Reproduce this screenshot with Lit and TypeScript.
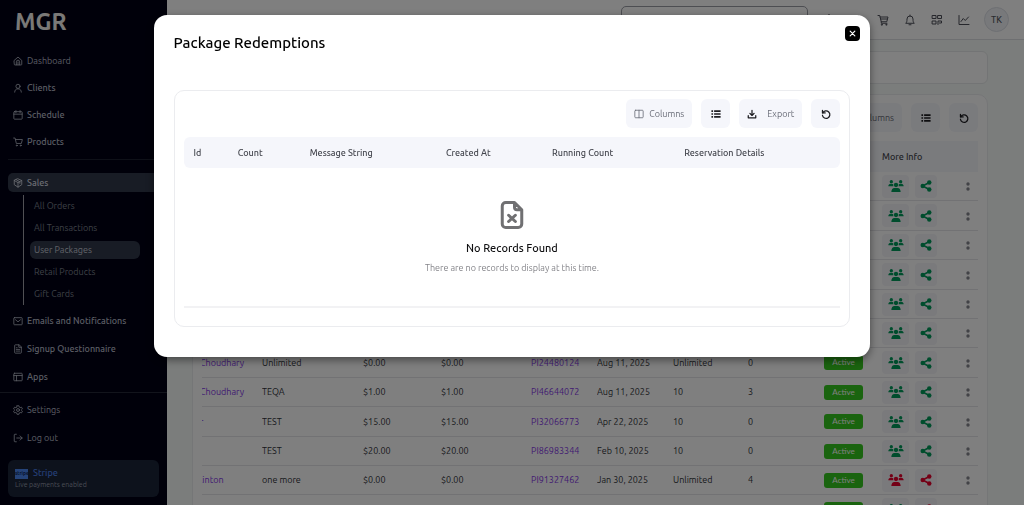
import { LitElement, html, css, svg, nothing } from "lit";
import { customElement } from "lit/decorators.js";
import { classMap } from "lit/directives/class-map.js";

const stroke = (body: unknown, cls = "", width = 2) => html`<svg class="icon ${cls}" viewBox="0 0 24 24" fill="none" stroke="currentColor" stroke-width=${width} stroke-linecap="round" stroke-linejoin="round" aria-hidden="true">${body}</svg>`;
const solid = (body: unknown, cls = "", box = "0 0 24 24") => html`<svg class="icon ${cls}" viewBox=${box} fill="currentColor" aria-hidden="true">${body}</svg>`;

const glyph = {
  home: svg`<path d="M3 10.5 12 2.5l9 8V20a1.5 1.5 0 0 1-1.5 1.5h-15A1.5 1.5 0 0 1 3 20z"/><path d="M8 21v-7a4 4 0 0 1 8 0v7M12 14v7"/>`,
  user: svg`<circle cx="12" cy="8" r="5"/><path d="M4 22c0-5 3-8 8-8s8 3 8 8"/>`,
  calendar: svg`<rect x="2" y="4" width="20" height="18" rx="1.5"/><path d="M2 10h20M7 1.5v5M17 1.5v5"/>`,
  cart: svg`<path d="M1.5 2.5H5l3 13h12l2.500-9.500H6"/><circle cx="9" cy="20.500" r="1.200"/><circle cx="18.500" cy="20.500" r="1.200"/>`,
  shop: svg`<path d="M2 3h3.500l3 12.500h11L22 6H6.300M8.500 15.500v3H20"/><circle cx="9.500" cy="21.500" r="1"/><circle cx="18.500" cy="21.500" r="1"/><path d="M7.500 10h13"/>`,
  box: svg`<path d="M12 2l9 4v10l-9 6-9-6V6z"/><path d="M3 6l9 5 9-5M12 11v11M7.500 4l9 5v4"/>`,
  mail: svg`<rect x="2" y="4" width="20" height="17" rx="1.500"/><path d="M6 9l6 5 6-5"/>`,
  doc: svg`<path d="M14 2H5.500A1.500 1.500 0 0 0 4 3.500v17A1.500 1.500 0 0 0 5.500 22h13a1.500 1.500 0 0 0 1.500-1.500V8z"/><path d="M14 2v6h6M8 13h8M8 17h8M8 9h2"/>`,
  layout: svg`<rect x="2" y="3" width="20" height="18" rx="1.500"/><path d="M2 8.500h20M8.500 8.500V21"/>`,
  gear: svg`<circle cx="12" cy="12" r="3.500"/><path d="M9.700 1.800h4.600l.8 3.300 2 1.200 3.300-1 2.200 4-2.400 2.300v1l2.400 2.300-2.200 4-3.300-1-2 1.200-.8 3.200H9.700l-.8-3.200-2-1.200-3.300 1-2.200-4 2.400-2.300v-1L1.400 9.300l2.200-4 3.300 1 2-1.200z"/>`,
  logout: svg`<path d="M8 3H4.500A1.500 1.500 0 0 0 3 4.500v15A1.500 1.500 0 0 0 4.500 21H8M9 12h13M17 7l5 5-5 5"/>`,
  columns: svg`<rect x="2" y="3" width="20" height="18" rx="2"/><path d="M12 3v18"/>`,
  download: svg`<path d="M12 3v12M7 10.500l5 5 5-5M3 16v5h18v-5"/>`,
  refresh: svg`<path d="M3.500 3v6.500H10"/><path d="M4.200 9.500a9 9 0 1 1-.8 5.500"/>`,
  list: svg`<path d="M1 3h4v4H1zM1 10h4v4H1zM1 17h4v4H1zM7.500 3H23v4H7.500zM7.500 10H23v4H7.500zM7.500 17H23v4H7.500z"/>`,
  bell: svg`<path d="M4 18c1.500-1.500 2-3 2-8a6 6 0 0 1 12 0c0 5 .5 6.500 2 8zM10 21.500h4M12 4V2"/>`,
  qr: svg`<path d="M3 3h7v6H3zM14 3h7v6h-7zM3 14h7v6H3zM14 21v-7h7v4h-4"/>`,
  chart: svg`<path d="M2 3v18h20"/><path d="M6 15l4.500-6 4 4L21 6"/>`,
  fileX: svg`<path d="M14 2H7a2.800 2.800 0 0 0-2.800 2.800v14.400A2.800 2.800 0 0 0 7 22h10a2.800 2.800 0 0 0 2.800-2.800V7.800zM14 2v3.800a2 2 0 0 0 2 2h3.800"/><path d="M9.300 12.200l5.400 5M14.700 12.200l-5.400 5"/>`,
  close: svg`<path d="M4 4l16 16M20 4L4 20"/>`,
  bulb: svg`<path d="M9 18h6M10 21.500h4M12 2a6.500 6.500 0 0 0-4 11.500L9 16h6l1-2.500A6.500 6.500 0 0 0 12 2z"/>`,
  grid: svg`<path d="M7 3v8M17 3v8M4 11h16v10H4z"/>`,
  group: svg`<circle cx="9" cy="5" r="5"/><circle cx="37" cy="5" r="5"/><circle cx="23" cy="15" r="6.500"/><path d="M0 18.500c0-5 3-7.500 7-7.500h3c2 0 3.500.5 5 1.500-.8 2.200-.4 4.200.5 6zM46 18.500c0-5-3-7.500-7-7.500h-3c-2 0-3.500.5-5 1.500.8 2.200.4 4.200-.5 6zM9 36c0-7 4-12 9-12h10c5 0 9 5 9 12z"/>`,
  share: svg`<circle cx="18.500" cy="5" r="4.500"/><circle cx="5.500" cy="12" r="4.500"/><circle cx="18.500" cy="19" r="4.500"/><path d="M5.500 12l13-7M5.500 12l13 7" stroke="currentColor" stroke-width="3"/>`,
  more: svg`<circle cx="6" cy="4" r="1.700"/><circle cx="6" cy="9" r="1.700"/>`,
};

const base = css`
  * { box-sizing: border-box; }
  .icon { display: block; width: 10px; height: 10px; flex: none; overflow: visible; }
  button, input { font: inherit; color: inherit; margin: 0; }
  button { border: 0; padding: 0; background: none; cursor: pointer; }
  a { color: inherit; text-decoration: none; }
`;

@customElement("side-bar")
class SideBar extends LitElement {
  static styles = [base, css`
    :host { display: flex; flex-direction: column; width: 167px; flex: none; background: #000014; color: #b6bac8; }
    .logo { padding: 5px 15px 0; height: 47px; font-size: 23px; line-height: 33px; font-weight: 600; color: #f4f2ee; }
    .group { padding: 0 8px; }
    .link { display: flex; align-items: center; gap: 4px; height: 27px; padding: 0 5px; border-radius: 5px; font-weight: 500; }
    .lower .link { height: 28px; }
    .link.plain { font-weight: 400; }
    .lower .link.open { height: 19px; background: #30384a; color: #d6dae4; }
    .rule { margin: 4px 8px 13px; border-top: 1px solid #1d2130; }
    .sub { margin: 3px 0 2px 15px; padding-left: 6px; border-left: 1px solid #a0a0a8; color: #7c808e; }
    .cell { display: flex; align-items: center; height: 22px; padding-right: 19px; }
    .sublink { flex: 1; height: 18px; line-height: 18px; padding: 0 4px; border-radius: 6px; }
    .sublink.here { background: #30384a; color: #c2c6d2; }
    .foot { margin-top: 1px; border-top: 1px solid #242838; padding: 3px 8px 8px; }
    .stripe { display: block; margin-top: 8px; padding: 8px 7px 0; height: 37px; border-radius: 6px; background: #1a2438; font-size: 7px; line-height: 11px; color: #959aaa; }
    .brand { display: flex; align-items: center; gap: 5px; font-size: 9px; line-height: 11px; font-weight: 500; color: #4a7fea; }
    .mark { width: 13px; height: 10px; background: #4a86f0; color: #10285c; font-size: 5px; line-height: 9px; font-weight: 700; text-align: center; }
  `];

  link(icon: unknown, label: string, kind = "") {
    return html`<a class="link ${kind}" href="#">${stroke(icon)}<span>${label}</span></a>`;
  }

  render() {
    const subs = ["All Orders", "All Transactions", "User Packages", "Retail Products", "Gift Cards"];
    return html`
      <div class="logo">MGR</div>
      <nav class="group">
        ${this.link(glyph.home, "Dashboard", "plain")}${this.link(glyph.user, "Clients")}
        ${this.link(glyph.calendar, "Schedule")}${this.link(glyph.cart, "Products")}
      </nav>
      <div class="rule"></div>
      <nav class="group lower">
        ${this.link(glyph.box, "Sales", "open")}
        <div class="sub">${subs.map((s) => html`<div class="cell"><a href="#" class=${classMap({ sublink: true, here: s === "User Packages" })}>${s}</a></div>`)}</div>
        ${this.link(glyph.mail, "Emails and Notifications")}${this.link(glyph.doc, "Signup Questionnaire")}
        ${this.link(glyph.layout, "Apps")}
      </nav>
      <div class="foot lower">
        ${this.link(glyph.gear, "Settings", "plain")}${this.link(glyph.logout, "Log out", "plain")}
        <a class="stripe" href="#"><span class="brand"><span class="mark">stripe</span>Stripe</span>Live payments enabled</a>
      </div>`;
  }
}

const toolbarStyles = css`
  .toolbar { display: flex; justify-content: flex-end; gap: 9px; margin-bottom: 9px; }
  .tool { display: flex; align-items: center; justify-content: center; gap: 5px; height: 29px; min-width: 29px; padding: 0 8px; border-radius: 6px; background: #f5f6fb; color: #6a6d78; }
  .tool.wide { gap: 10px; }
  .dark { color: #1c1c20; }
  .card { border: 1px solid #ebecef; border-radius: 10px; background: #fff; padding: 8px 9px 0; }
  table { width: 100%; border-collapse: separate; border-spacing: 0; table-layout: fixed; }
  th, td { padding: 0; text-align: left; white-space: nowrap; }
  th { height: 31px; background: #f5f6fb; font-weight: 500; color: #44464e; }
`;

type Row = [string, string, string, string, string, string, string, string?];

const rows: Row[] = [
  ...Array.from({ length: 6 }, () => ["", "", "", "", "", "", ""] as Row),
  ["Choudhary", "Unlimited", "$0.00", "PI24480124", "Aug 11, 2025", "Unlimited", "0"],
  ["Choudhary", "TEQA", "$1.00", "PI46644072", "Aug 11, 2025", "10", "3"],
  ["r", "TEST", "$15.00", "PI32066773", "Apr 22, 2025", "10", "0"],
  ["", "TEST", "$20.00", "PI86983344", "Feb 10, 2025", "10", "0"],
  ["linton", "one more", "$0.00", "PI91327462", "Jan 30, 2025", "Unlimited", "4", "red"],
  ["", "", "", "", "", "", "", "half"],
];

@customElement("packages-page")
class PackagesPage extends LitElement {
  static styles = [base, toolbarStyles, css`
    :host { display: flex; flex-direction: column; flex: 1; min-width: 0; background: #f7fbf9; color: #303238; }
    header { display: flex; align-items: center; justify-content: flex-end; height: 40px; flex: none; padding-right: 15px; border-bottom: 1px solid #dcdee2; background: #fff; color: #4c4e58; }
    .search { width: 187px; height: 28px; margin-right: 15px; border: 1px solid #9a9ca4; border-radius: 5px; background: #fff; }
    .tray { display: flex; gap: 15px; margin-right: 14px; }
    .tray .icon { width: 12px; height: 12px; }
    .avatar { width: 25px; height: 25px; border-radius: 50%; border: 1px solid #dcdfe6; background: #f0f2f6; font-weight: 500; color: #555862; }
    main { padding: 11px 36px 0 25px; overflow: hidden; }
    .filters { height: 33px; margin-bottom: 10px; border: 1px solid #e6e9ea; border-radius: 6px; background: #fff; }
    .w-name { width: 60px; } .w-pack { width: 101px; } .w-price { width: 78px; } .w-paid { width: 90px; }
    .w-pay { width: 66px; } .w-date { width: 76px; } .w-total { width: 75px; } .w-used { width: 76px; }
    .w-status { width: 58px; } .w-info { width: 80px; } .w-menu { width: 16px; }
    td { height: 29px; border-bottom: 1px solid #e4e4e8; overflow: hidden; }
    tr:nth-child(5n + 2) td, tr:nth-child(5n + 4) td { height: 30px; }
    .clip { text-indent: -2px; }
    .link { color: #8234e4; }
    .status { display: block; width: 39px; height: 15px; line-height: 15px; border-radius: 3px; background: #35c81e; color: #fff; font-family: Lato, sans-serif; font-size: 8px; text-align: center; }
    .pair { display: flex; gap: 6px; color: #009a5a; }
    .pair.red, .red { color: #e8002c; }
    .mini { display: flex; align-items: center; justify-content: center; width: 27px; height: 23px; border-radius: 4px; background: #f5f5f9; }
    .mini.slim { width: 22px; }
    .people { width: 16px; height: 12px; }
    .nodes { width: 12px; height: 12px; }
    .dots { display: block; width: 12px; height: 12px; color: #85878f; }
  `];

  render() {
    const cols = ["name", "pack", "price", "paid", "pay", "date", "total", "used", "status", "info", "menu"];
    return html`
      <header>
        <input class="search" type="search" aria-label="Search" />
        <div class="tray">
          ${[glyph.bulb, glyph.grid, glyph.shop, glyph.bell, glyph.qr, glyph.chart].map((g) => html`<button>${stroke(g)}</button>`)}
        </div>
        <button class="avatar">TK</button>
      </header>
      <main>
        <div class="filters"></div>
        <section class="card">
          <div class="toolbar">
            <button class="tool">${stroke(glyph.columns)}Columns</button>
            <button class="tool dark" aria-label="Density">${solid(glyph.list)}</button>
            <button class="tool dark" aria-label="Reload">${stroke(glyph.refresh, "", 3)}</button>
          </div>
          <table>
            <colgroup>${cols.map((c) => html`<col class="w-${c}" />`)}</colgroup>
            <thead><tr><th colspan="9"></th><th>More Info</th><th></th></tr></thead>
            <tbody>${rows.map(([name, pack, price, pay, date, total, used, tone]) => html`<tr>
              <td class="clip link">${name}</td><td>${pack}</td><td>${price}</td><td>${price}</td>
              <td>${pay ? html`<a class="link" href="#">${pay}</a>` : nothing}</td>
              <td>${date}</td><td>${total}</td><td>${used}</td>
              <td>${pay || tone ? html`<span class="status">Active</span>` : nothing}</td>
              <td><div class=${classMap({ pair: true, red: tone === "red" })}>
                <button class="mini" aria-label="Members">${solid(glyph.group, "people", "0 0 46 36")}</button>
                <button class=${classMap({ mini: true, slim: true, red: !!tone })} aria-label="Share">${solid(glyph.share, "nodes")}</button>
              </div></td>
              <td><button class="dots" aria-label="Row menu">${solid(glyph.more, "nodes", "0 0 12 12")}</button></td>
            </tr>`)}</tbody>
          </table>
        </section>
      </main>`;
  }
}

@customElement("redemptions-dialog")
class RedemptionsDialog extends LitElement {
  static styles = [base, toolbarStyles, css`
    :host { position: fixed; inset: 0; z-index: 10; display: flex; align-items: flex-start; justify-content: center; padding-top: 15px; background: rgba(0, 0, 0, 0.5); }
    .dialog { position: relative; width: 70%; padding: 18px 20px 30px; border-radius: 13px; background: #fff; box-shadow: 0 3px 9px rgba(0, 0, 0, 0.45); }
    h2 { margin: 0 0 37px; font-size: 15px; line-height: 20px; font-weight: 500; color: #000; }
    .close { position: absolute; top: 11px; right: 10px; display: flex; align-items: center; justify-content: center; width: 15px; height: 15px; border-radius: 4px; background: #000; color: #fff; }
    .close .icon { width: 7px; height: 7px; }
    .card { padding-bottom: 18px; }
    th { padding-left: 10px; }
    th:first-child { border-radius: 6px 0 0 6px; }
    th:last-child { border-radius: 0 6px 6px 0; }
    .w1 { width: 44px; } .w2 { width: 72px; } .w3 { width: 136px; } .w4 { width: 106px; } .w5 { width: 132px; } .w6 { width: 166px; }
    td { height: 140px; border-bottom: 2px solid #f2f2f4; }
    .empty { display: flex; flex-direction: column; align-items: center; padding-top: 2px; color: #85858a; }
    .file { width: 30px; height: 30px; color: #707072; }
    .none { margin: 9px 0 2px; font-size: 11px; line-height: 18px; font-weight: 500; color: #101012; }
    .note { line-height: 18px; }
  `];

  render() {
    const heads = ["Id", "Count", "Message String", "Created At", "Running Count", "Reservation Details"];
    return html`
      <section class="dialog" role="dialog" aria-label="Package Redemptions">
        <h2>Package Redemptions</h2>
        <button class="close" aria-label="Close">${stroke(glyph.close, "", 4)}</button>
        <div class="card">
          <div class="toolbar">
            <button class="tool">${stroke(glyph.columns)}Columns</button>
            <button class="tool dark" aria-label="Density">${solid(glyph.list)}</button>
            <button class="tool wide"><span class="dark">${stroke(glyph.download, "", 3)}</span>Export</button>
            <button class="tool dark" aria-label="Reload">${stroke(glyph.refresh, "", 3)}</button>
          </div>
          <table>
            <colgroup>${heads.map((_, i) => html`<col class="w${i + 1}" />`)}</colgroup>
            <thead><tr>${heads.map((h) => html`<th>${h}</th>`)}</tr></thead>
            <tbody><tr><td colspan="6"><div class="empty">
              ${stroke(glyph.fileX, "file", 2.4)}
              <div class="none">No Records Found</div>
              <div class="note">There are no records to display at this time.</div>
            </div></td></tr></tbody>
          </table>
        </div>
      </section>`;
  }
}

@customElement("app-root")
class AppRoot extends LitElement {
  static styles = css`
    :host { display: flex; height: 100vh; overflow: hidden; font: 9px/12px Ubuntu, "Noto Sans", "Open Sans", sans-serif; }
  `;

  render() {
    return html`<side-bar></side-bar><packages-page></packages-page><redemptions-dialog></redemptions-dialog>`;
  }
}
